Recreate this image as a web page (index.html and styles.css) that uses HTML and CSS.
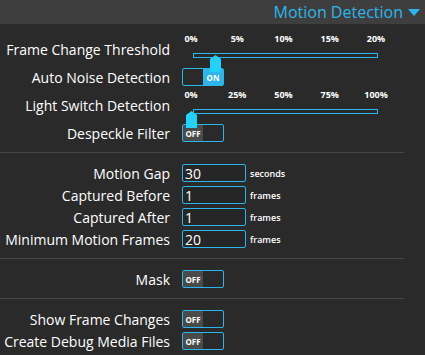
FILE: index.html
```html
<!DOCTYPE html>
<html lang="en">
<head>
  <meta charset="UTF-8" />
  <title>Motion Detection</title>
  <link rel="stylesheet" href="styles.css">
</head>
<body>
  <div class="header">
    <span class="title">Motion Detection</span>
    <span class="caret"></span>
  </div>

  <div class="panel">
    <div class="section first">
      <div class="row slider-row">
        <label>Frame Change Threshold</label>
        <div class="slider">
          <div class="ticks"><span>0%</span><span>5%</span><span>10%</span><span>15%</span><span>20%</span></div>
          <div class="track-wrap">
            <div class="track"></div>
            <div class="thumb" style="left: 28px"></div>
          </div>
        </div>
      </div>
      <div class="row">
        <label>Auto Noise Detection</label>
        <div class="toggle on"><span class="half"></span><span class="half lit">ON</span></div>
      </div>
      <div class="row slider-row">
        <label>Light Switch Detection</label>
        <div class="slider">
          <div class="ticks"><span>0%</span><span>25%</span><span>50%</span><span>75%</span><span>100%</span></div>
          <div class="track-wrap">
            <div class="track"></div>
            <div class="thumb" style="left: 4px"></div>
          </div>
        </div>
      </div>
      <div class="row">
        <label>Despeckle Filter</label>
        <div class="toggle"><span class="half grey">OFF</span><span class="half"></span></div>
      </div>
    </div>

    <div class="section">
      <div class="row">
        <label>Motion Gap</label>
        <div class="field"><input type="text" value="30"><span class="unit">seconds</span></div>
      </div>
      <div class="row">
        <label>Captured Before</label>
        <div class="field"><input type="text" value="1"><span class="unit">frames</span></div>
      </div>
      <div class="row">
        <label>Captured After</label>
        <div class="field"><input type="text" value="1"><span class="unit">frames</span></div>
      </div>
      <div class="row">
        <label>Minimum Motion Frames</label>
        <div class="field"><input type="text" value="20"><span class="unit">frames</span></div>
      </div>
    </div>

    <div class="section">
      <div class="row">
        <label>Mask</label>
        <div class="toggle"><span class="half grey">OFF</span><span class="half"></span></div>
      </div>
    </div>

    <div class="section">
      <div class="row">
        <label>Show Frame Changes</label>
        <div class="toggle"><span class="half grey">OFF</span><span class="half"></span></div>
      </div>
      <div class="row">
        <label>Create Debug Media Files</label>
        <div class="toggle"><span class="half grey">OFF</span><span class="half"></span></div>
      </div>
    </div>
  </div>
</body>
</html>
```

FILE: styles.css
```css
body {
  margin: 0;
  background: #2a2a2a;
  color: #ffffff;
  font-family: "Open Sans", sans-serif;
}

.header {
  height: 24px;
  background: #3e3e3e;
  display: flex;
  justify-content: flex-end;
  align-items: center;
  padding-right: 5px;
}

.title {
  color: #2db6ec;
  font-size: 16px;
  line-height: 24px;
}

.caret {
  width: 0;
  height: 0;
  margin-left: 5px;
  border-left: 6.5px solid transparent;
  border-right: 6.5px solid transparent;
  border-top: 7px solid #2db6ec;
}

.panel {
  width: 404px;
}

.section {
  border-top: 1px solid #474747;
  padding: 9px 0 8px;
}

.section.first {
  border-top: none;
  padding-top: 8px;
}

.row {
  display: grid;
  grid-template-columns: 170px 1fr;
  column-gap: 12px;
  align-items: center;
  height: 22px;
}

.row.slider-row {
  height: 34px;
}

label {
  text-align: right;
  font-size: 14px;
  white-space: nowrap;
}

.slider-row label {
  margin-bottom: 9px;
}

/* sliders */
.slider {
  width: 210px;
}

.ticks {
  height: 12px;
  margin-left: 9px;
  width: 185px;
  display: flex;
  justify-content: space-between;
  align-items: center;
}

.ticks span {
  width: 0;
  display: flex;
  justify-content: center;
  font-size: 9px;
  font-weight: bold;
  white-space: nowrap;
}

.track-wrap {
  position: relative;
  height: 22px;
}

.track {
  margin: 9px 0 0 11px;
  width: 183px;
  height: 3px;
  border: 1px solid #2db6ec;
  background: #2a2a2a;
}

.thumb {
  position: absolute;
  top: 2px;
  width: 11px;
  height: 17px;
  background: #22d2fc;
  clip-path: polygon(0 4px, 5.5px 0, 11px 4px, 11px 17px, 0 17px);
}

/* toggles */
.toggle {
  width: 40px;
  height: 16px;
  border: 1px solid #2db6ec;
  border-radius: 2px;
  display: flex;
}

.half {
  width: 20px;
  display: flex;
  align-items: center;
  justify-content: center;
  font-size: 8px;
  font-weight: bold;
}

.half.lit {
  background: #2db6ec;
}

.half.grey {
  background: #4a4a4a;
}

/* number fields */
.field {
  display: flex;
  align-items: center;
}

input {
  width: 58px;
  height: 16px;
  padding: 0 2px;
  margin: 0;
  border: 1px solid #2db6ec;
  border-radius: 2px;
  background: #262626;
  color: #ffffff;
  font-family: "Open Sans", sans-serif;
  font-size: 14px;
  outline: none;
}

.unit {
  margin-left: 4px;
  font-size: 9px;
  font-weight: 600;
}
```
